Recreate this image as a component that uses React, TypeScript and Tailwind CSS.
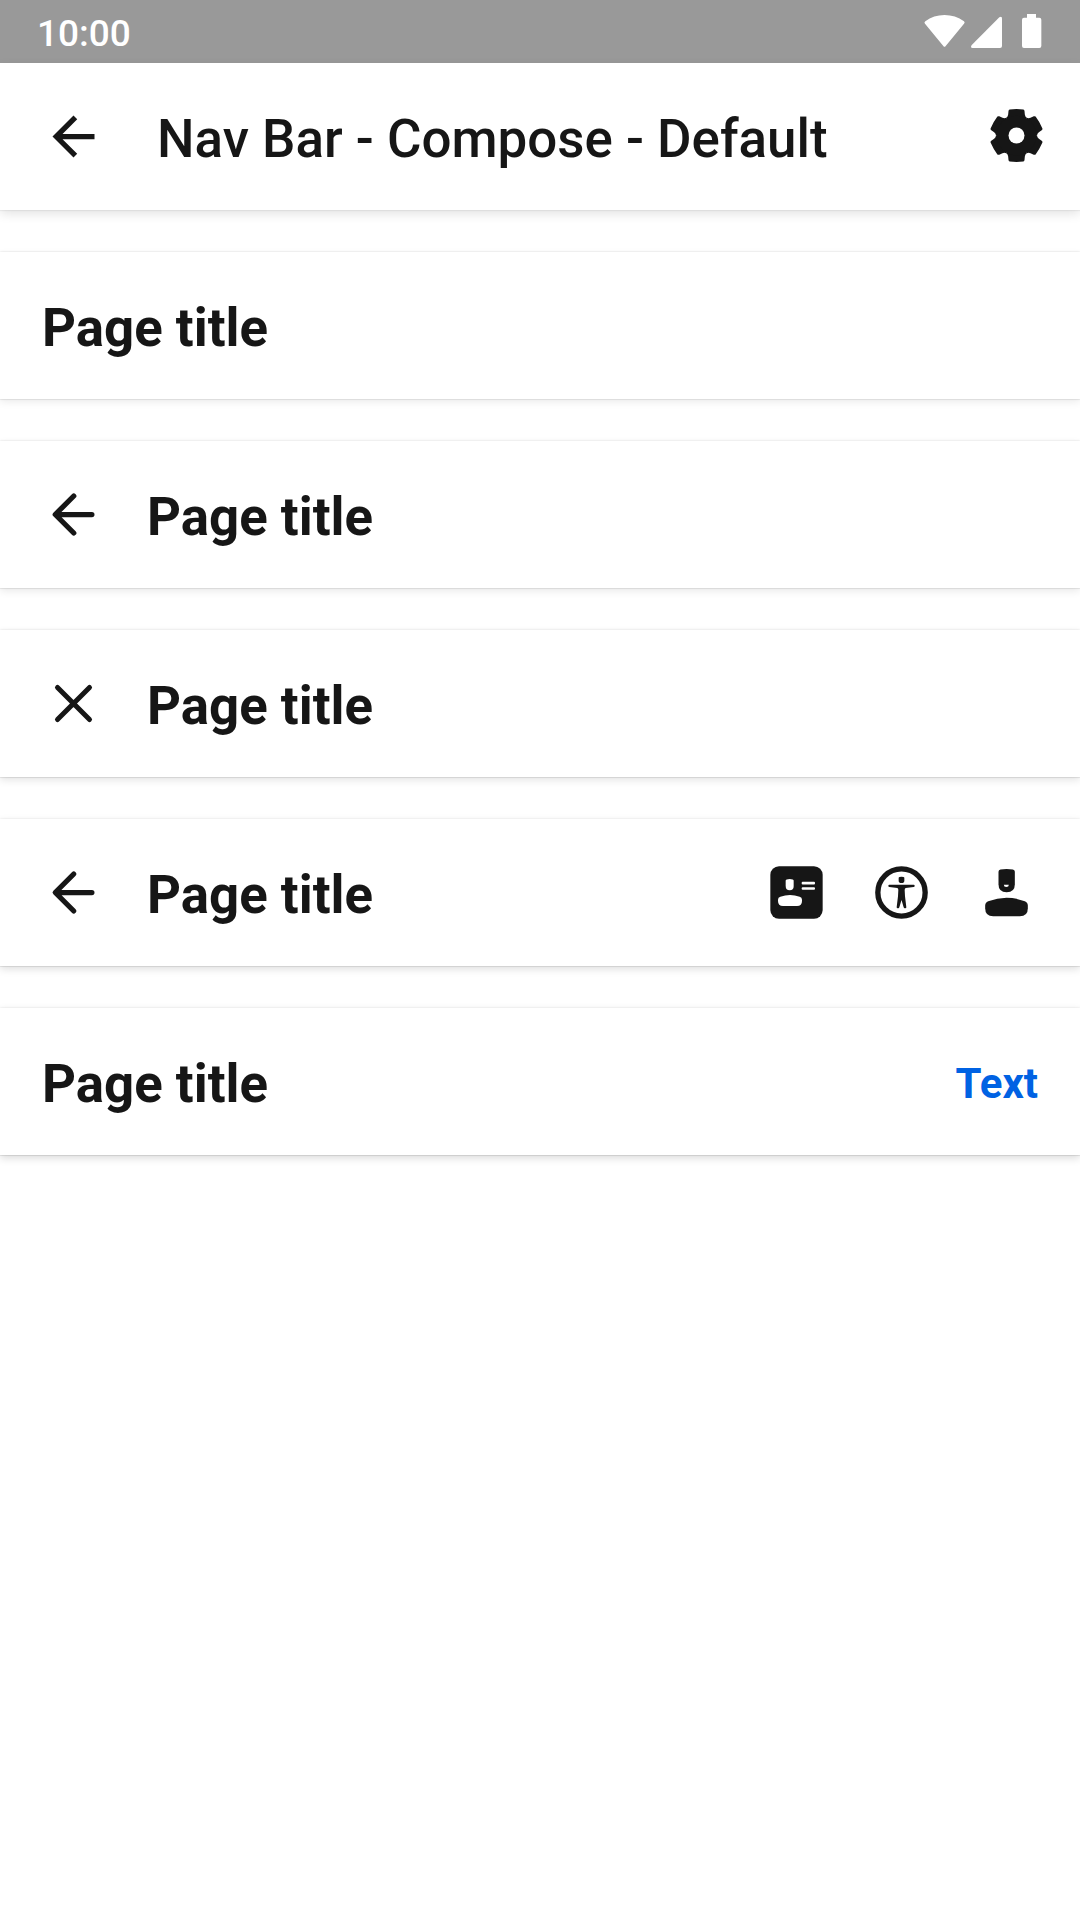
import type { ReactNode } from "react";

const INK = "#161616";

function StatusIcons() {
  return (
    <svg className="h-[63px] w-[180px]" viewBox="0 0 540 189" fill="#fff">
      <path d="M75 71Q71 67 76 63.500Q101 45 133.500 45Q166 45 192 63.500Q196 67 192 71L136.500 139Q133.500 142 130.500 139Z" />
      <path d="M216 134L298 52Q306 47 306 56V138Q306 144 300 144H218Q209 142 216 134Z" />
      <path d="M381 42H408V53H418Q424 53 424 59V138Q424 144 418 144H372Q366 144 366 138V59Q366 53 372 53H381Z" />
    </svg>
  );
}

function SharpArrow() {
  return (
    <svg className="size-[63px]" viewBox="0 0 24 24" fill={INK}>
      <path d="M20 11H7.830l5.590-5.590L12 4l-8 8 8 8 1.410-1.410L7.830 13H20z" />
    </svg>
  );
}

function RoundArrow() {
  return (
    <svg className="size-[63px]" viewBox="0 0 24 24" fill="none" stroke={INK} strokeWidth="2" strokeLinecap="round" strokeLinejoin="round">
      <path d="M19 12H5.200M12.100 4.950L5.050 12L12.100 19.050" />
    </svg>
  );
}

function Cross() {
  return (
    <svg className="size-[63px]" viewBox="0 0 24 24" fill="none" stroke={INK} strokeWidth="1.900" strokeLinecap="round">
      <path d="M5.900 5.900L18.100 18.100M18.100 5.900L5.900 18.100" />
    </svg>
  );
}

function Gear() {
  const tooth =
    "M0 0L-30.750 -53.300Q-25.800 -56.500 -25 -63L-24 -73.500Q-23.500 -77.300 -20.500 -78Q0 -80.500 20.500 -78Q23.500 -77.300 24 -73.500L25 -63Q25.800 -56.500 30.750 -53.300Z";
  return (
    <svg className="size-[63px]" viewBox="-94.500 -94.500 189 189" fill={INK}>
      {[0, 60, 120, 180, 240, 300].map((a) => (
        <path key={a} d={tooth} transform={`rotate(${a})`} />
      ))}
      <circle r="59.500" />
      <circle r="24" fill="#fff" />
    </svg>
  );
}

function IdCard() {
  return (
    <svg className="size-[63px]" viewBox="0 0 189 189" fill="#fff">
      <rect x="16" y="16" width="157" height="157" rx="26" fill={INK} />
      <path d="M62 59Q62 54 74 54Q86 54 86 59V75Q86 88 74 88Q62 88 62 75Z" />
      <path d="M39 116Q39 109 46 107Q75 97 104 107Q111 109 111 116V120Q111 135 96 135H54Q39 135 39 120Z" />
      <rect x="110" y="62.500" width="40" height="8" rx="3" />
      <rect x="110" y="78.500" width="40" height="8" rx="3" />
    </svg>
  );
}

function Accessibility() {
  return (
    <svg className="size-[63px]" viewBox="0 0 189 189" fill={INK}>
      <circle cx="94.500" cy="94.500" r="71" fill="none" stroke={INK} strokeWidth="16" />
      <path d="M86 50Q86 47 94.500 47Q103 47 103 50V59Q103 66 94.500 66Q86 66 86 59Z" />
      <path d="M58 71H131Q134 71 134 74.500Q134 78 131 78L107 81Q104 82 104 87L105 106L109 139Q109 142 106 142H104Q102 142 101 139L94.500 117L88 139Q87 142 85 142H83Q80 142 80 139L84 106L85 87Q85 82 82 81L58 78Q55 78 55 74.500Q55 71 58 71Z" />
    </svg>
  );
}

function Person() {
  return (
    <svg className="size-[63px]" viewBox="0.500 0 189 189" fill={INK}>
      <path d="M71 32Q71 27 77 25.500Q95 22 114 25.500Q120 27 120 32V70Q120 94 95.500 94Q71 94 71 70Z" />
      <path d="M87 71H102Q102 78 94.500 78Q87 78 87 71Z" fill="#fff" />
      <path d="M31 134Q31 125 40 121Q95 99 150 121Q159 125 159 134V142Q159 166 135 166H55Q31 166 31 142Z" />
    </svg>
  );
}

function NavBar({ leading, trailing, shadow }: { leading?: ReactNode; trailing?: ReactNode; shadow: string }) {
  return (
    <section className={`flex h-[147px] items-center bg-white pl-[42px] ${shadow}`}>
      {leading && <div className="mr-[42px]">{leading}</div>}
      <h2 className="grow pt-[6px] text-[52.800px] leading-[63px] font-bold">Page title</h2>
      {trailing}
    </section>
  );
}

export default function App() {
  return (
    <main className="h-[1920px] w-[1080px] overflow-hidden bg-white font-[Roboto,sans-serif] text-[#161616]">
      <div className="flex h-[63px] items-center justify-between bg-[#999999] pl-[37px] text-[37px] font-medium text-white">
        <span className="pt-[4px]">10:00</span>
        <StatusIcons />
      </div>
      <header className="flex h-[147px] items-center bg-white pr-[32px] pl-[42px] shadow-[0_4px_10px_rgba(0,0,0,0.11),0_1px_1px_rgba(0,0,0,0.05)]">
        <SharpArrow />
        <h1 className="ml-[52px] grow pt-[5px] text-[52.900px] leading-[63px] font-medium">Nav Bar - Compose - Default</h1>
        <div className="-mt-[2px]">
          <Gear />
        </div>
      </header>
      <div className="mt-[42px] flex flex-col gap-[42px]">
        <NavBar shadow="shadow-[0_3px_8px_rgba(0,0,0,0.08),0_0_2px_rgba(0,0,0,0.15),0_1px_0_rgba(0,0,0,0.03)]" />
        <NavBar shadow="shadow-[0_3px_8px_rgba(0,0,0,0.09),0_0_2px_rgba(0,0,0,0.14),0_1px_0_rgba(0,0,0,0.04)]" leading={<RoundArrow />} />
        <NavBar shadow="shadow-[0_3px_8px_rgba(0,0,0,0.11),0_0_2px_rgba(0,0,0,0.12),0_1px_0_rgba(0,0,0,0.05)]" leading={<Cross />} />
        <NavBar
          shadow="shadow-[0_3px_8px_rgba(0,0,0,0.13),0_0_2px_rgba(0,0,0,0.1),0_1px_0_rgba(0,0,0,0.06)]"
          leading={<RoundArrow />}
          trailing={
            <div className="flex gap-[42px] pr-[42px]">
              <IdCard />
              <Accessibility />
              <Person />
            </div>
          }
        />
        <NavBar
          shadow="shadow-[0_3px_8px_rgba(0,0,0,0.15),0_0_2px_rgba(0,0,0,0.1),0_1px_0_rgba(0,0,0,0.06)]"
          trailing={<span className="pt-[4px] pr-[42px] text-[42px] font-bold text-[#0062e3]">Text</span>}
        />
      </div>
    </main>
  );
}
